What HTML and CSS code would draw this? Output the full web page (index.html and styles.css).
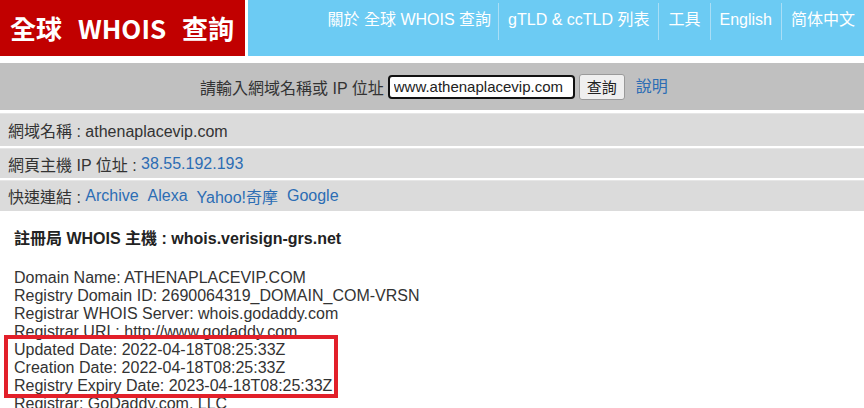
FILE: index.html
```html
<!DOCTYPE html>
<html lang="zh-Hant">
<head>
<meta charset="utf-8">
<title>全球 WHOIS 查詢</title>
<link rel="stylesheet" href="styles.css">
</head>
<body>
<header class="top">
  <div class="logo">全球 WHOIS 查詢</div>
  <nav class="nav">
    <a class="nav-item first" href="#">關於 全球 WHOIS 查詢</a>
    <a class="nav-item" href="#">gTLD &amp; ccTLD 列表</a>
    <a class="nav-item" href="#">工具</a>
    <a class="nav-item" href="#">English</a>
    <a class="nav-item" href="#">简体中文</a>
  </nav>
</header>

<form class="search">
  <label class="search-label" for="q">請輸入網域名稱或 IP 位址</label>
  <input class="search-input" id="q" type="text" value="www.athenaplacevip.com">
  <button class="search-btn" type="button">查詢</button>
  <a class="help" href="#">說明</a>
</form>

<div class="rows">
  <div class="row r1">網域名稱 : athenaplacevip.com</div>
  <div class="row r2">網頁主機 IP 位址 : <a href="#">38.55.192.193</a></div>
  <div class="row r3">快速連結 : <a href="#">Archive</a>&nbsp; <a href="#">Alexa</a>&nbsp; <a href="#">Yahoo!奇摩</a>&nbsp; <a href="#">Google</a></div>
</div>

<main class="content">
  <h2 class="server">註冊局 WHOIS 主機 : whois.verisign-grs.net</h2>
  <div class="whois">
    <div>Domain Name: ATHENAPLACEVIP.COM</div>
    <div>Registry Domain ID: 2690064319_DOMAIN_COM-VRSN</div>
    <div>Registrar WHOIS Server: whois.godaddy.com</div>
    <div>Registrar URL: http://www.godaddy.com</div>
    <div>Updated Date: 2022-04-18T08:25:33Z</div>
    <div>Creation Date: 2022-04-18T08:25:33Z</div>
    <div>Registry Expiry Date: 2023-04-18T08:25:33Z</div>
    <div>Registrar: GoDaddy.com, LLC</div>
    <div class="mark"></div>
  </div>
</main>
</body>
</html>
```

FILE: styles.css
```css
* { box-sizing: border-box; }
html, body { margin: 0; padding: 0; }
body {
  background: #fff;
  font-family: "Liberation Sans", Arial, "Noto Sans CJK TC", sans-serif;
  color: #333;
  width: 864px;
  height: 408px;
  overflow: hidden;
}
a { text-decoration: none; color: #2c6db4; }

.top {
  display: flex;
  height: 56px;
  gap: 3px;
}
.logo {
  width: 245px;
  background: #c10000;
  color: #fff;
  font-family: "Noto Sans CJK TC", sans-serif;
  font-weight: 700;
  font-size: 26px;
  word-spacing: 10px;
  line-height: 56px;
  padding-left: 10px;
  white-space: nowrap;
}
.nav {
  flex: 1;
  background: #6ccbf3;
  display: flex;
  justify-content: flex-end;
  align-items: flex-start;
  padding: 3px 0 0 0;
}
.nav-item {
  color: #fff;
  font-size: 16px;
  line-height: 20px;
  padding: 7px 9px 10px 9px;
  border-left: 1px solid #a9def6;
  white-space: nowrap;
}
.nav-item.first { border-left: none; padding-right: 7px; }

.search {
  margin: 7px 0 0 0;
  height: 47px;
  background: #c0c0c0;
  display: flex;
  align-items: center;
  padding-left: 200px;
}
.search-label {
  font-size: 16px;
  color: #333;
  margin-right: 4px;
}
.search-input {
  width: 187px;
  height: 24px;
  border: 2px solid #111;
  border-radius: 4px;
  padding: 0 4px;
  font-family: "Liberation Sans", Arial, sans-serif;
  font-size: 15px;
  color: #222;
  background: #fff;
  outline: none;
}
.search-btn {
  margin-left: 4px;
  width: 46px;
  height: 26px;
  background: #efefef;
  border: 1px solid #9a9a9a;
  border-radius: 3px;
  font-family: "Noto Sans CJK TC", sans-serif;
  font-size: 15px;
  color: #222;
  padding: 0;
}
.help {
  margin-left: 11px;
  font-size: 16px;
  color: #2c6db4;
  margin-top: -4px;
}

.rows {
  margin-top: 3px;
  display: flex;
  flex-direction: column;
  gap: 2px;
}
.row {
  background: #dbdbdb;
  border-top: 1px solid #e6e6e6;
  font-size: 16px;
  color: #333;
  padding-left: 8px;
  display: flex;
  align-items: center;
  white-space: pre;
}
.r1 { height: 33px; }
.r2 { height: 30px; }
.r3 { height: 31px; }

.content {
  padding: 19px 0 0 14px;
}
.server {
  margin: 0;
  font-size: 16px;
  line-height: 18px;
  font-weight: 700;
  color: #222;
}
.whois {
  position: relative;
  margin-top: 21px;
  font-size: 16px;
  line-height: 18px;
  color: #333;
}
.mark {
  position: absolute;
  left: -10px;
  top: 66px;
  width: 334px;
  height: 63px;
  border: 4px solid #e2202a;
}
```
